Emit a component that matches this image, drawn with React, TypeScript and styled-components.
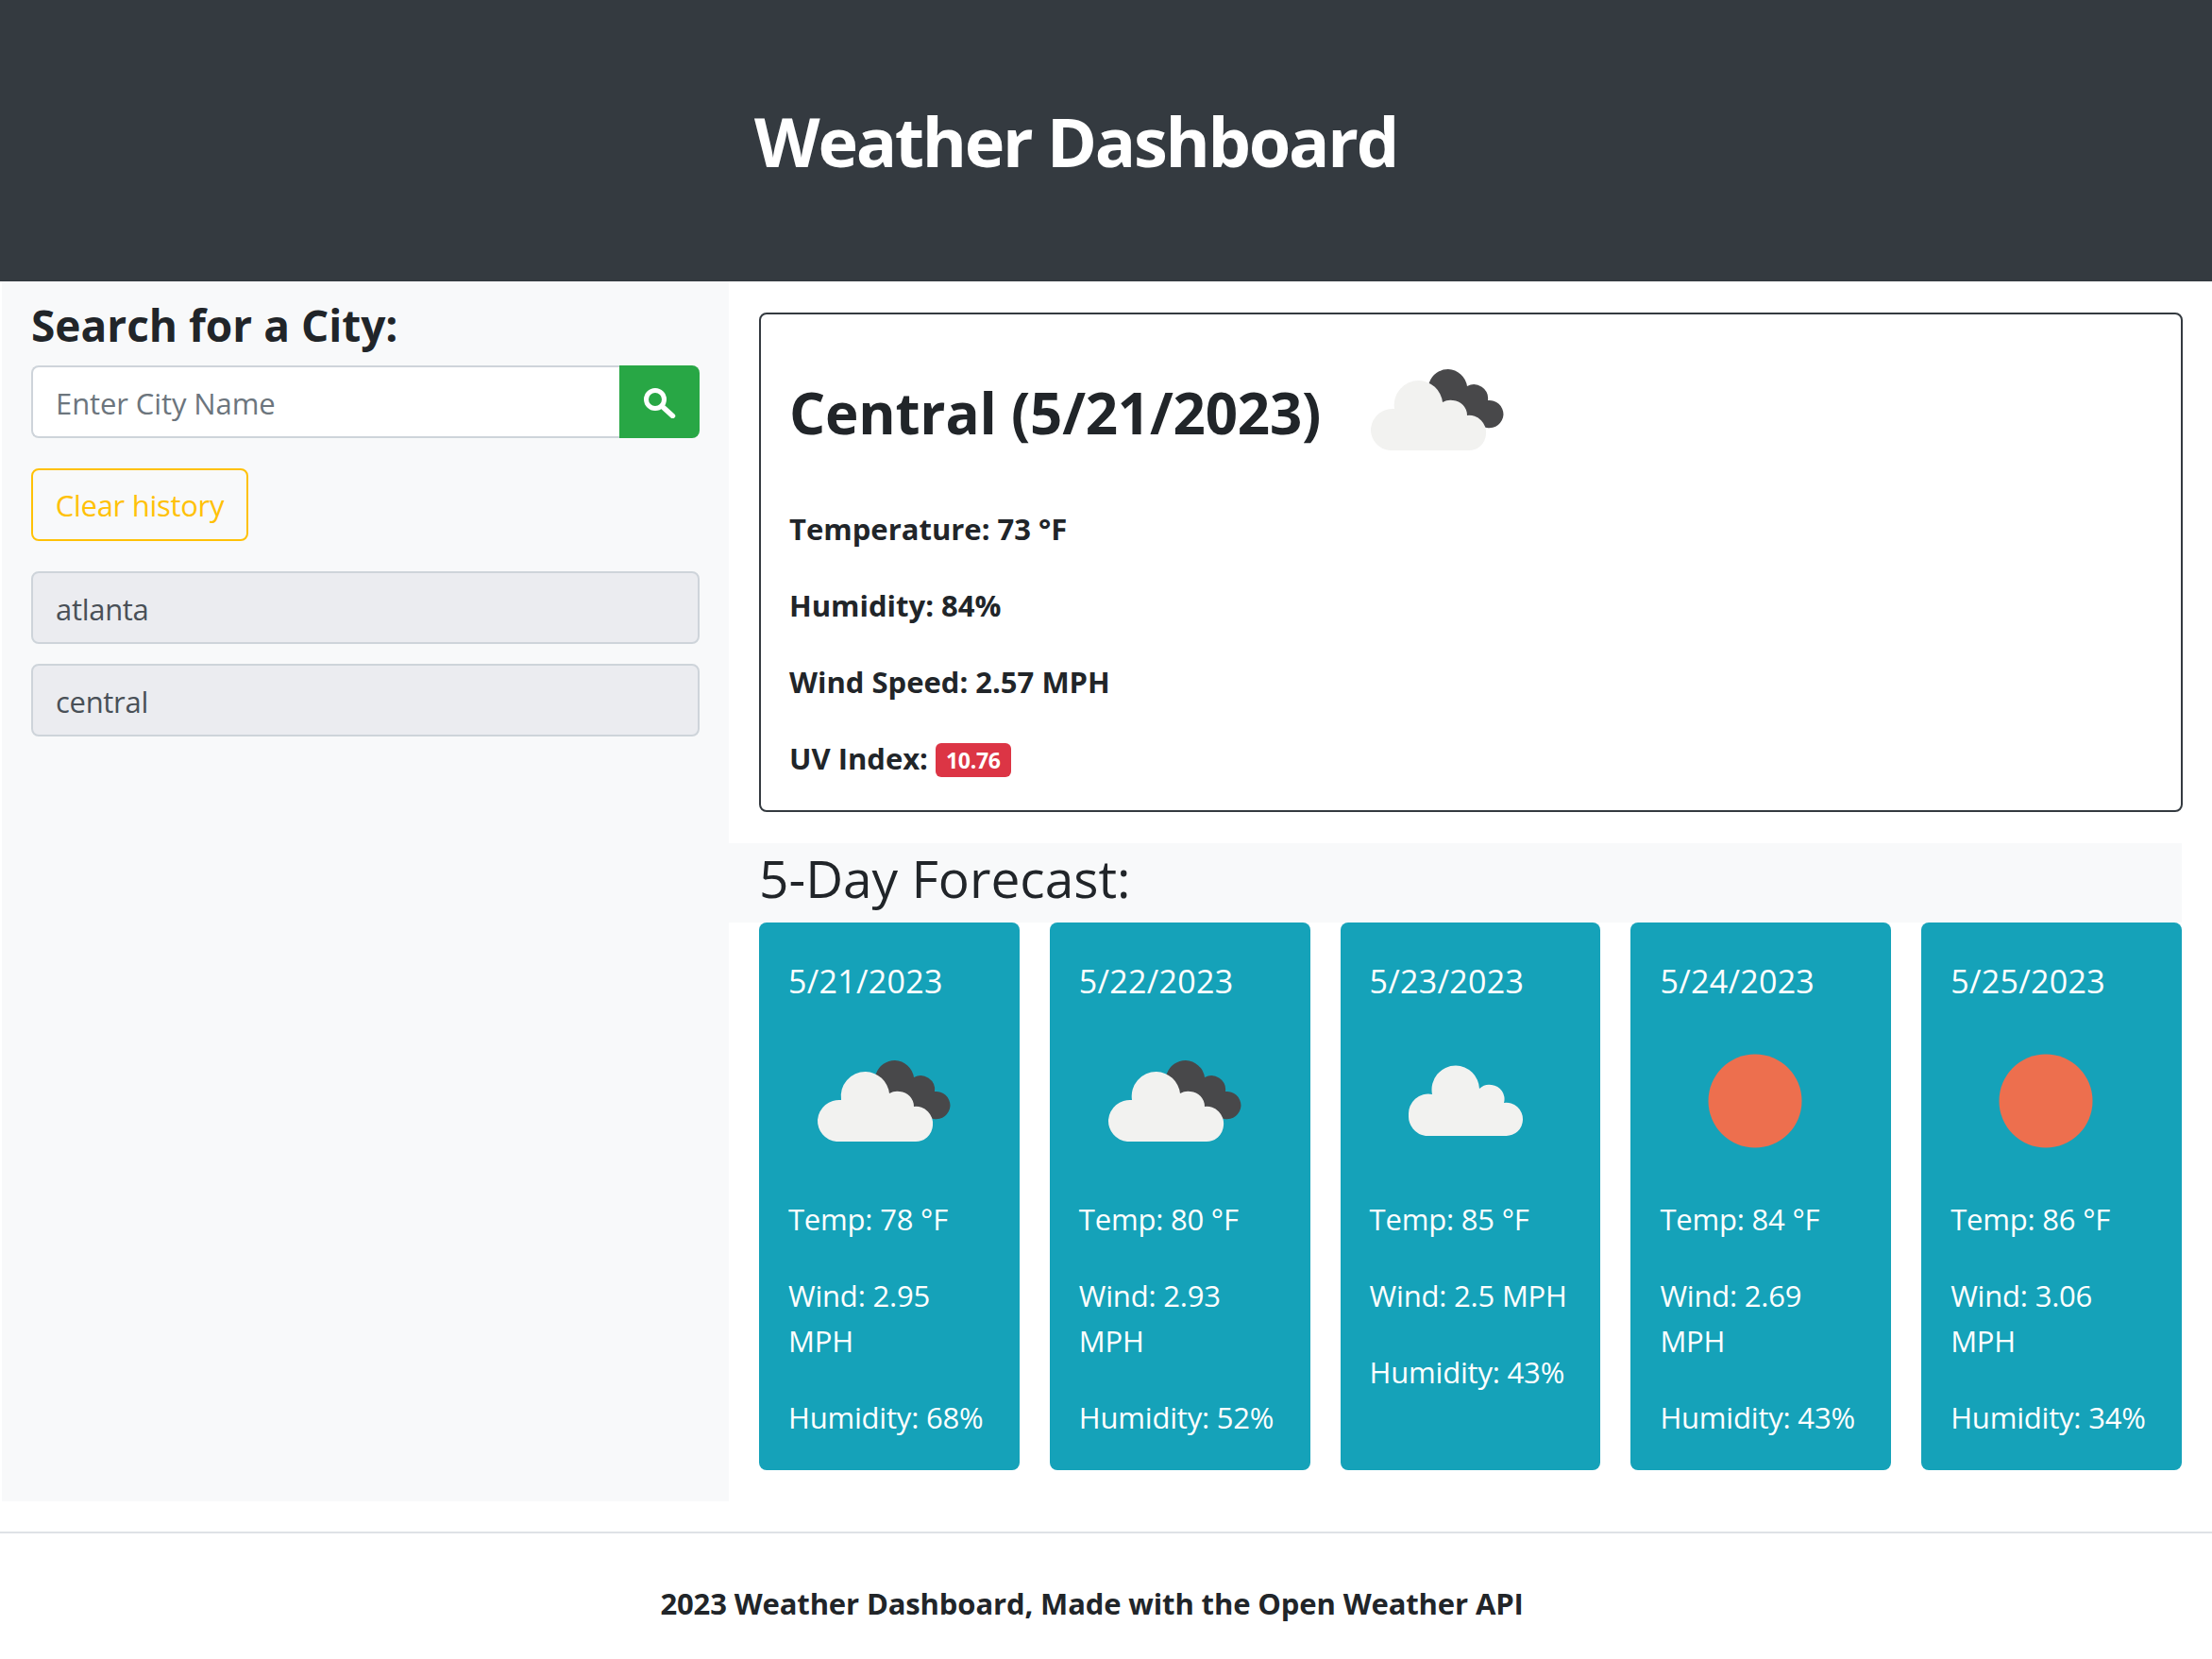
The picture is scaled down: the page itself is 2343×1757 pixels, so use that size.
import React from "react";
import styled, { createGlobalStyle } from "styled-components";

const GlobalStyle = createGlobalStyle`
  * { box-sizing: border-box; }
  html, body { margin: 0; padding: 0; background: #fff; }
  body {
    font-family: "Open Sans", "Noto Sans", sans-serif;
    font-size: 31px;
    line-height: 48px;
    color: #212529;
    overflow: hidden;
  }
`;

const Page = styled.div`
  width: 2343px;
  height: 1757px;
  overflow: hidden;
`;
const Header = styled.header`
  height: 298px;
  background: #343a40;
  display: flex;
  align-items: center;
  justify-content: center;
  padding-right: 64px;
`;
const Title = styled.h1`
  margin: 0;
  color: #fff;
  font-size: 72px;
  line-height: 96px;
  font-weight: 700;
  letter-spacing: -2.3px;
`;
const Row = styled.div`
  display: flex;
  height: 1292px;
`;
const Sidebar = styled.aside`
  width: 770px;
  margin-left: 2px;
  flex: none;
  background: #f8f9fa;
  padding: 17px 31px 0;
`;
const SideTitle = styled.h3`
  margin: 0 0 14px;
  font-size: 46px;
  line-height: 58px;
  font-weight: 700;
`;
const SearchGroup = styled.div`
  display: flex;
  height: 77px;
  margin-bottom: 32px;
`;
const SearchInput = styled.input`
  flex: 1;
  min-width: 0;
  border: 2px solid #ced4da;
  border-right: none;
  border-radius: 8px 0 0 8px;
  background: #fff;
  padding: 2px 24px 0;
  font-family: inherit;
  font-size: 31px;
  letter-spacing: -0.1px;
  color: #495057;
  &::placeholder { color: #6c757d; opacity: 1; }
`;
const SearchButton = styled.button`
  width: 85px;
  border: none;
  border-radius: 0 8px 8px 0;
  background: #28a745;
  display: flex;
  align-items: center;
  justify-content: center;
  padding: 0;
`;
const ClearButton = styled.button`
  display: block;
  width: 230px;
  height: 77px;
  margin-bottom: 32px;
  padding: 0;
  background: transparent;
  border: 2px solid #ffc107;
  border-radius: 8px;
  color: #ffc107;
  font-family: inherit;
  font-size: 31px;
  letter-spacing: -0.3px;
`;
const HistoryItem = styled.div`
  height: 77px;
  margin-bottom: 21px;
  padding: 3px 24px 0;
  display: flex;
  align-items: center;
  background: #ebecf0;
  border: 2px solid #ced4da;
  border-radius: 8px;
  color: #495057;
  font-size: 31px;
  letter-spacing: -0.3px;
`;
const Main = styled.main`
  flex: 1;
  min-width: 0;
  padding: 33px 31px 0 0;
`;
const CurrentBox = styled.section`
  margin-left: 32px;
  height: 529px;
  border: 2px solid #343a40;
  border-radius: 8px;
  padding: 26px 30px 0;
`;
const CurrentHead = styled.div`
  display: flex;
  align-items: center;
  height: 150px;
  margin-bottom: 27px;
`;
const CityName = styled.h2`
  margin: 6px 48px 0 0;
  font-size: 60px;
  line-height: 80px;
  font-weight: 700;
  letter-spacing: -0.2px;
`;
const Stat = styled.p`
  margin: 0 0 33px;
  font-size: 31px;
  font-weight: 700;
`;
const UvBadge = styled.span`
  display: inline-block;
  vertical-align: 1px;
  height: 36px;
  line-height: 36px;
  padding: 0 11px;
  border-radius: 6px;
  background: #dc3545;
  color: #fff;
  font-size: 23px;
  letter-spacing: -0.3px;
`;
const ForecastHeading = styled.h3`
  margin: 33px 1px 0 0;
  height: 84px;
  padding-left: 32px;
  background: #f8f9fa;
  font-size: 55px;
  line-height: 74px;
  font-weight: 400;
`;
const CardGrid = styled.div`
  margin: 0 1px 0 32px;
  display: grid;
  grid-template-columns: repeat(5, 1fr);
  column-gap: 32px;
`;
const DayCard = styled.article`
  height: 580px;
  padding: 38px 31px 0;
  background: #15a2b9;
  border-radius: 8px;
  color: #fff;
  font-size: 31px;
  letter-spacing: -0.2px;
`;
const DayDate = styled.h5`
  margin: 0 0 28px;
  font-size: 34px;
  line-height: 48px;
  font-weight: 400;
  letter-spacing: 0.3px;
`;
const DayIcon = styled.div`
  width: 150px;
  height: 150px;
  margin: 0 0 26px 26px;
`;
const DayLine = styled.p`
  margin: 0 0 33px;
`;
const Footer = styled.footer`
  margin-top: 32px;
  border-top: 2px solid #dee2e6;
  padding: 50px 30px 0 0;
  text-align: center;
  font-size: 31px;
  font-weight: 700;
  letter-spacing: -0.13px;
`;

type IconKind = "broken" | "cloud" | "sun";

const FRONT_CLOUD =
  "M25 118A22 22 0 0 1 5 95A23 23 0 0 1 30 74A26 26 0 0 1 56 44A26 26 0 0 1 81 67A17 17 0 0 1 92 65A16 16 0 0 1 107 81A18 18 0 0 1 127 101A18 18 0 0 1 108 118Z";
const BACK_CLOUD =
  "M67 46A21 21 0 0 1 87 32A21 21 0 0 1 107 50A15 15 0 0 1 129 65A15 15 0 0 1 145.5 80A15 15 0 0 1 128 94L100 90L60 60Z";
const SINGLE_CLOUD =
  "M33 112A21 21 0 0 1 15 90A21 21 0 0 1 40 68A25.5 25.5 0 0 1 65 37.5A25.5 25.5 0 0 1 90 62A15 15 0 0 1 103 58A15 15 0 0 1 116 77A17.5 17.5 0 0 1 136 95A17.5 17.5 0 0 1 118 112Z";

const WeatherIcon = ({ kind }: { kind: IconKind }) => (
  <svg width="150" height="150" viewBox="0 0 150 150">
    {kind === "sun" && <circle cx="75" cy="75" r="49.5" fill="#ed6f4e" />}
    {kind === "cloud" && <path d={SINGLE_CLOUD} fill="#f2f2f0" />}
    {kind === "broken" && (
      <>
        <path d={BACK_CLOUD} fill="#48484a" />
        <path d={FRONT_CLOUD} fill="#f2f2f0" />
      </>
    )}
  </svg>
);

const SearchIcon = () => (
  <svg width="34" height="34" viewBox="0 0 34 34" fill="none" stroke="#fff" strokeLinecap="round">
    <circle cx="12" cy="14" r="9.5" strokeWidth="5" />
    <path d="M19.5 21.5L30.5 31.5" strokeWidth="5.5" />
  </svg>
);

const days: { date: string; icon: IconKind; temp: number; wind: string; humidity: number }[] = [
  { date: "5/21/2023", icon: "broken", temp: 78, wind: "2.95", humidity: 68 },
  { date: "5/22/2023", icon: "broken", temp: 80, wind: "2.93", humidity: 52 },
  { date: "5/23/2023", icon: "cloud", temp: 85, wind: "2.5", humidity: 43 },
  { date: "5/24/2023", icon: "sun", temp: 84, wind: "2.69", humidity: 43 },
  { date: "5/25/2023", icon: "sun", temp: 86, wind: "3.06", humidity: 34 },
];

const App = () => {
  return (
    <Page>
      <GlobalStyle />
      <Header>
        <Title>Weather Dashboard</Title>
      </Header>
      <Row>
        <Sidebar>
          <SideTitle>Search for a City:</SideTitle>
          <SearchGroup>
            <SearchInput placeholder="Enter City Name" />
            <SearchButton aria-label="Search">
              <SearchIcon />
            </SearchButton>
          </SearchGroup>
          <ClearButton>Clear history</ClearButton>
          <HistoryItem>atlanta</HistoryItem>
          <HistoryItem>central</HistoryItem>
        </Sidebar>
        <Main>
          <CurrentBox>
            <CurrentHead>
              <CityName>Central (5/21/2023)</CityName>
              <WeatherIcon kind="broken" />
            </CurrentHead>
            <Stat>Temperature: 73 °F</Stat>
            <Stat>Humidity: 84%</Stat>
            <Stat>Wind Speed: 2.57 MPH</Stat>
            <Stat>
              UV Index: <UvBadge>10.76</UvBadge>
            </Stat>
          </CurrentBox>
          <ForecastHeading>5-Day Forecast:</ForecastHeading>
          <CardGrid>
            {days.map((day) => (
              <DayCard key={day.date}>
                <DayDate>{day.date}</DayDate>
                <DayIcon>
                  <WeatherIcon kind={day.icon} />
                </DayIcon>
                <DayLine>Temp: {day.temp} °F</DayLine>
                <DayLine>Wind: {day.wind} MPH</DayLine>
                <DayLine>Humidity: {day.humidity}%</DayLine>
              </DayCard>
            ))}
          </CardGrid>
        </Main>
      </Row>
      <Footer>2023 Weather Dashboard, Made with the Open Weather API</Footer>
    </Page>
  );
};

export default App;
